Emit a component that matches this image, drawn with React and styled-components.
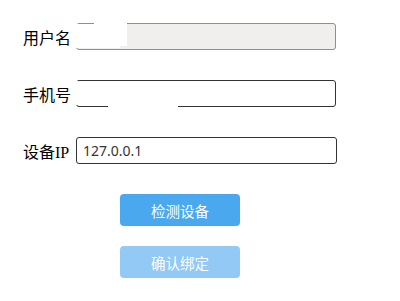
import React from "react";
import styled, { createGlobalStyle } from "styled-components";

const Global = createGlobalStyle`
  html, body { margin: 0; padding: 0; background: #fff; }
  body { width: 400px; height: 301px; overflow: hidden; }
`;

const Page = styled.div`
  padding: 23px 0 0 23px;
  display: flex;
  flex-direction: column;
`;

const Form = styled.div`
  display: flex;
  flex-direction: column;
  gap: 30px;
`;

const Row = styled.div`
  display: flex;
  align-items: center;
  height: 27px;
`;

const Label = styled.label`
  width: 53px;
  font-family: "Liberation Serif", "Noto Sans CJK SC", serif;
  font-size: 16px;
  color: #000;
  white-space: nowrap;
`;

const Field = styled.div`
  position: relative;
  width: ${(p) => p.$w || 260}px;
  height: 27px;
`;

const Input = styled.input`
  box-sizing: border-box;
  width: 100%;
  height: 100%;
  margin: 0;
  padding: 0 6px;
  border: 1px solid ${(p) => (p.disabled ? "#8f8f8d" : "#333")};
  border-radius: 3px;
  background: ${(p) => (p.disabled ? "#f0efee" : "#fff")};
  font-family: "Noto Sans", sans-serif;
  font-size: 14px;
  color: #333;
  outline: none;
`;

const Mask = styled.div`
  position: absolute;
  background: #fff;
`;

const Buttons = styled.div`
  display: flex;
  flex-direction: column;
  gap: 20px;
  margin: 30px 0 0 97px;
`;

const Button = styled.button`
  width: 120px;
  height: 32px;
  border: none;
  border-radius: 4px;
  background: ${(p) => (p.$disabled ? "#93c9f5" : "#4aa8ef")};
  color: #fff;
  font-family: "Noto Sans CJK SC", sans-serif;
  font-weight: 400;
  font-size: 14.5px;
  padding: 0;
  cursor: pointer;
`;

export default function App() {
  return (
    <>
      <Global />
      <Page>
        <Form>
          <Row>
            <Label>用户名</Label>
            <Field>
              <Input disabled />
              <Mask style={{ left: 0, top: 1, width: 51, height: 22 }} />
              <Mask style={{ left: 18, top: 0, width: 33, height: 2 }} />
              <Mask style={{ left: 0, top: 22, width: 44, height: 3 }} />
            </Field>
          </Row>
          <Row>
            <Label>手机号</Label>
            <Field>
              <Input />
              <Mask style={{ left: 0, top: 1, width: 2, height: 24 }} />
              <Mask style={{ left: 32, top: 24, width: 70, height: 3 }} />
            </Field>
          </Row>
          <Row>
            <Label>设备IP</Label>
            <Field $w={261}>
              <Input defaultValue="127.0.0.1" />
            </Field>
          </Row>
        </Form>
        <Buttons>
          <Button>检测设备</Button>
          <Button $disabled>确认绑定</Button>
        </Buttons>
      </Page>
    </>
  );
}
